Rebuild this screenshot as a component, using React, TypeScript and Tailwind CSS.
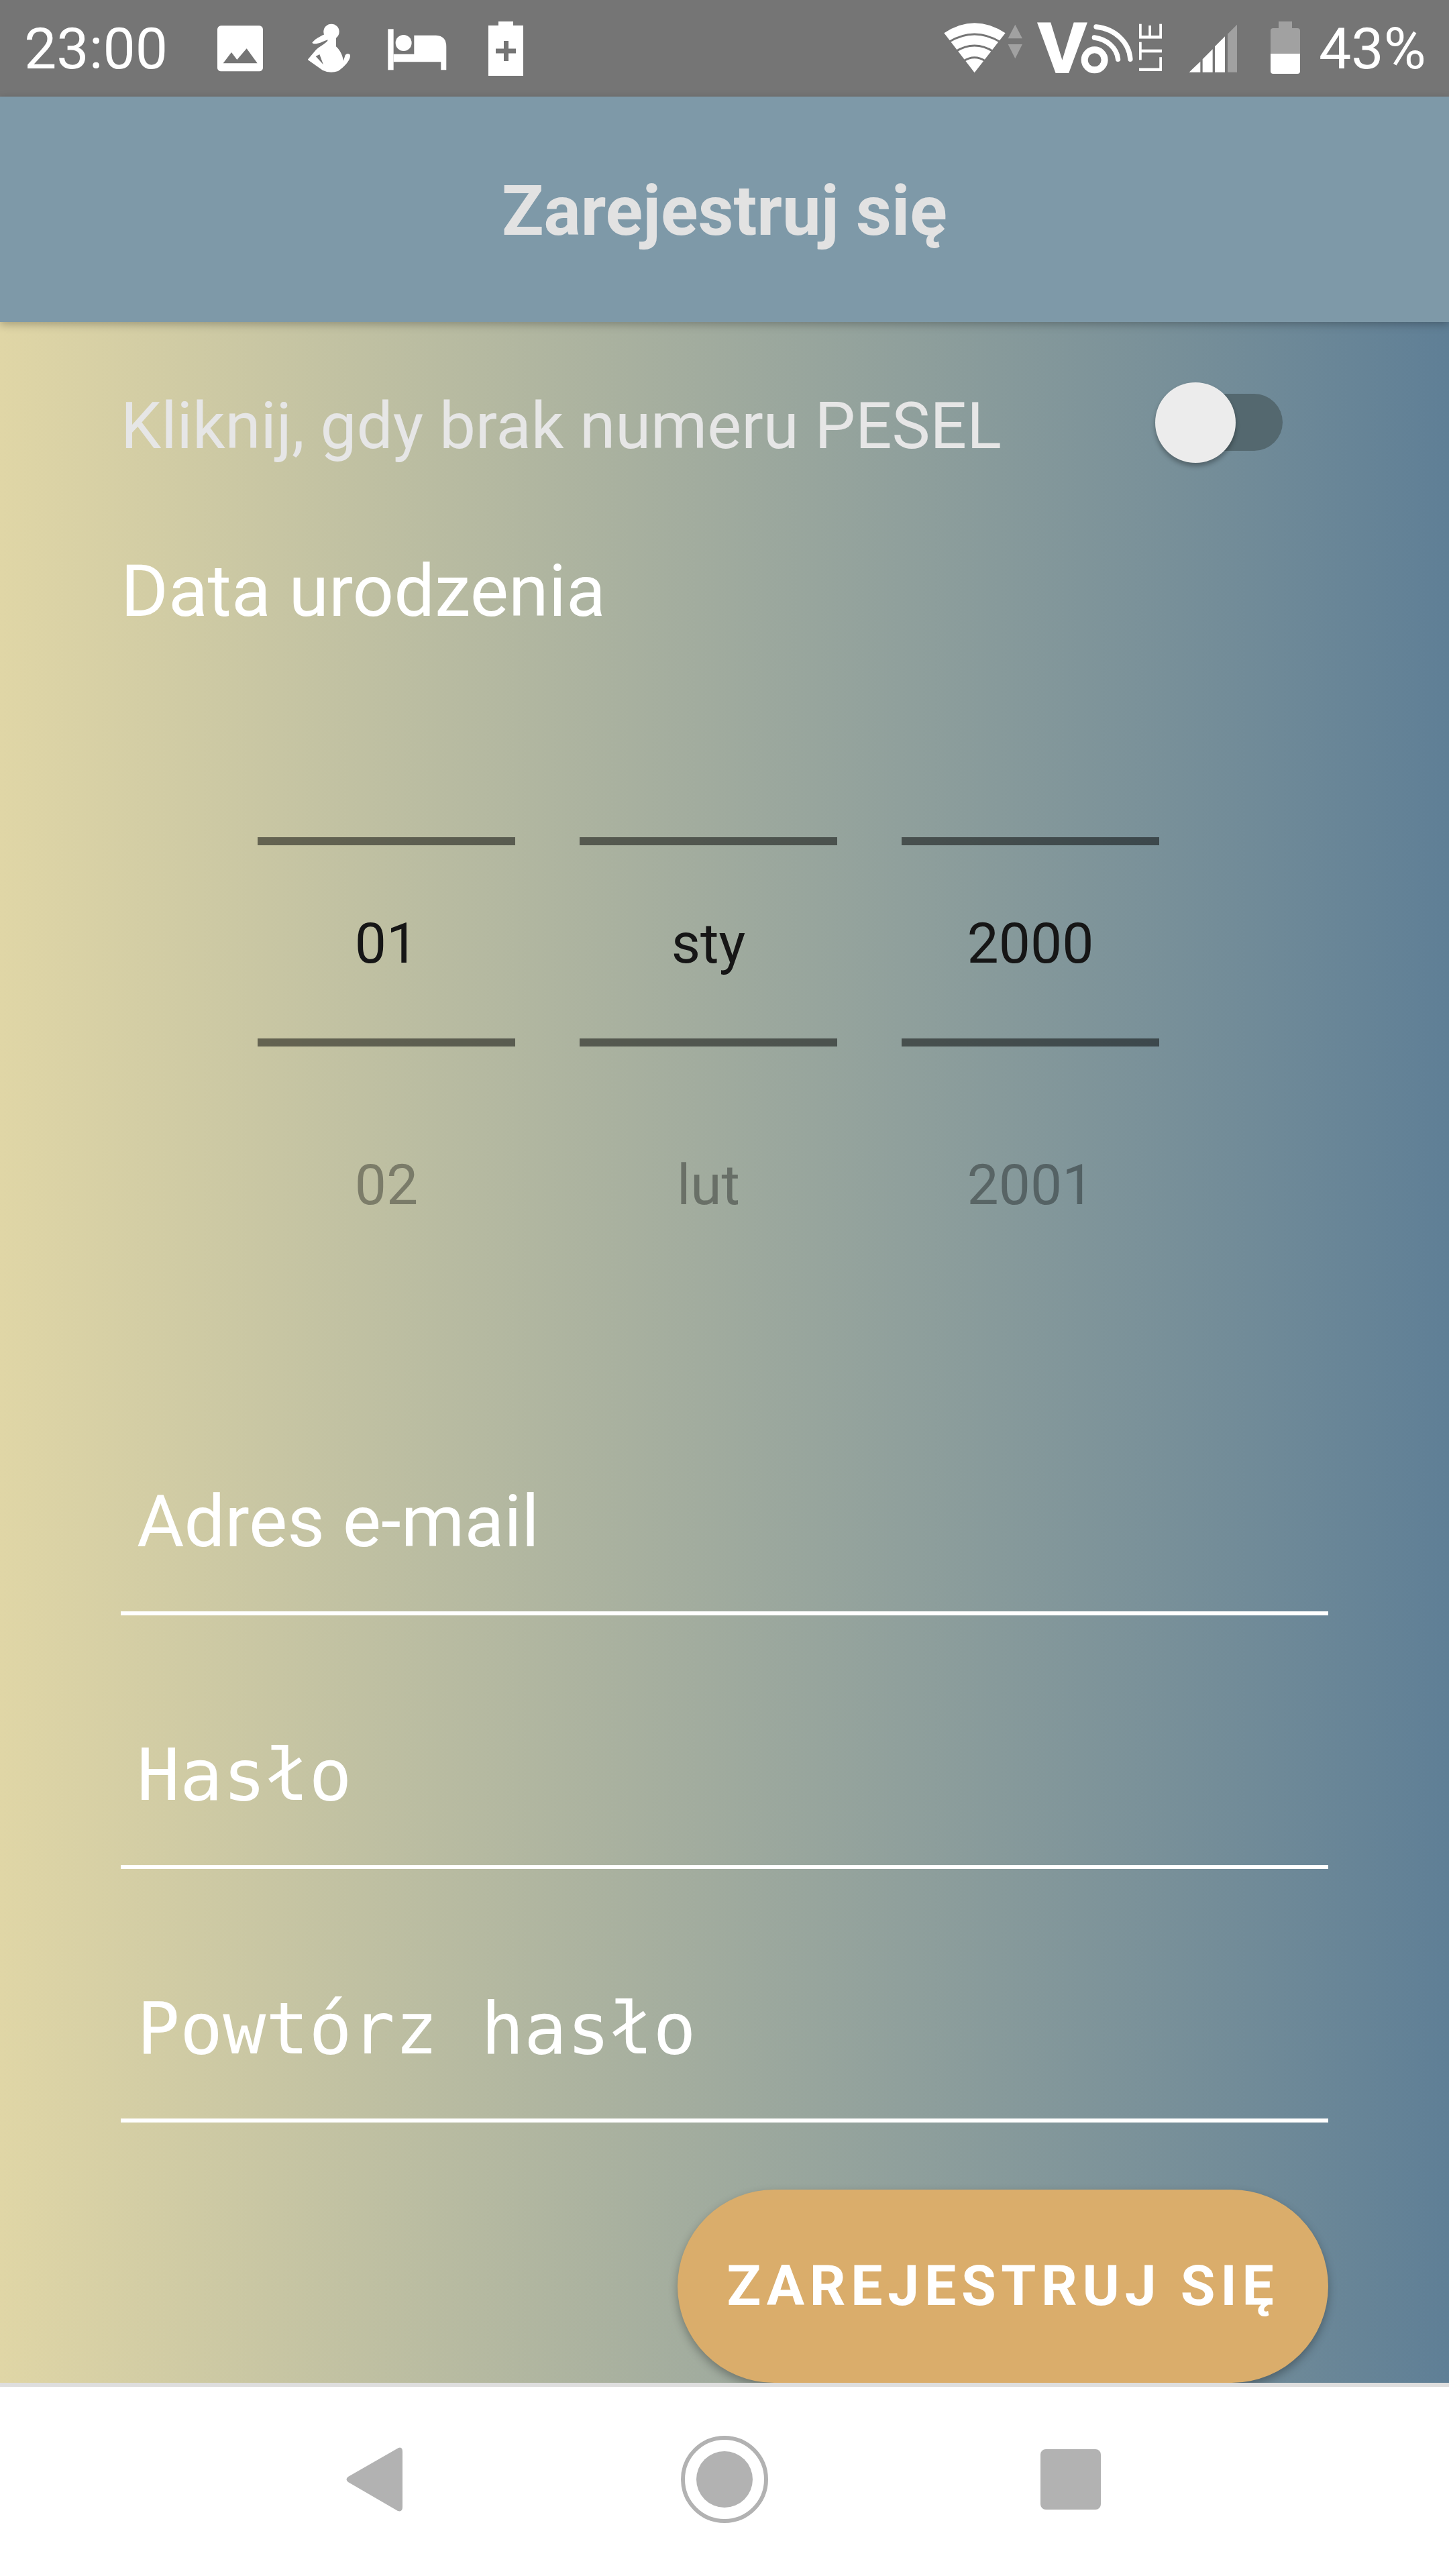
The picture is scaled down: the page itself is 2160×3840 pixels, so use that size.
import React from "react";

const G = "#757575";
const DIM = "#a1a1a1";

function ImageIcon() {
  return (
    <svg className="ml-[72px] shrink-0" width="68" height="144" viewBox="324 0 68 144">
      <g transform="translate(300 30) scale(0.3333)">
        <rect x="72" y="25" width="204" height="204" rx="16" fill="#fff" />
        <path d="M98 193 L135 144 L160 177 L203 127 L251 193 Z" fill={G} />
      </g>
    </svg>
  );
}

function RunnerIcon() {
  return (
    <svg className="ml-[67px] shrink-0" width="63" height="144" viewBox="459 0 63 144">
      <g transform="translate(300 30) scale(0.3333)" fill="#fff">
        <ellipse cx="582" cy="52" rx="35" ry="35" />
        <path d="M565 58 C530 72 505 88 496 101 C505 112 530 104 572 84 Z" />
        <path d="M565 70 L603 70 L603 118 C624 138 632 160 636 182 L644 156 Q656 144 667 156 C666 182 640 208 612 228 Q575 240 543 224 L476 177 L514 132 C530 116 552 108 565 92 Z" />
        <path d="M512 162 L529 153 L546 199 Z" fill={G} />
      </g>
    </svg>
  );
}

function BedIcon() {
  return (
    <svg className="ml-[56px] shrink-0" width="88" height="144" viewBox="578 0 88 144">
      <g transform="translate(300 30) scale(0.3333)" fill="#fff">
        <rect x="835" y="40" width="25" height="183" />
        <path d="M860 152 H952 V68 H1050 Q1096 70 1096 118 V223 H1072 V187 H860 Z" />
        <circle cx="905" cy="102" r="36" />
      </g>
    </svg>
  );
}

function BatteryPlusIcon() {
  return (
    <svg className="ml-[61px] shrink-0" width="53" height="144" viewBox="727 0 53 144">
      <path d="M743 38 V32 H765 V38 H780 V113 H728 V38 Z" fill="#fff" />
      <path d="M739 72.5 H751 V61 H758 V72.5 H769 V79.5 H758 V91 H751 V79.5 H739 Z" fill={G} />
    </svg>
  );
}

function WifiIcon() {
  return (
    <svg className="shrink-0" width="120" height="144" viewBox="1405 0 120 144">
      <g transform="translate(1300 20) scale(0.3333)">
        <path d="M458 265 L322 88 Q458 -2 596 88 Z" fill="#fff" />
        <path d="M342 128 Q458 58 574 128 M374 170 Q458 118 542 170 M408 214 Q458 180 508 214" stroke={G} strokeWidth="9" fill="none" />
        <path d="M640 50 L672 112 H608 Z M608 138 H672 L640 202 Z" fill={DIM} />
      </g>
    </svg>
  );
}

function VoLteIcon() {
  return (
    <svg className="ml-[22px] shrink-0 overflow-visible" width="186" height="144" viewBox="1547 0 186 144">
      <text x="1546" y="109" fontFamily="Roboto" fontWeight="800" fontSize="106" textLength="75" lengthAdjust="spacingAndGlyphs" fill="#fff">V</text>
      <g transform="translate(1300 20) scale(0.3333)" fill="none" stroke="#fff">
        <circle cx="995" cy="208" r="45" strokeWidth="30" />
        <path d="M1002 60 C1090 70 1150 130 1155 205 M994 108 C1050 115 1095 155 1100 205" strokeWidth="22" strokeLinecap="round" />
      </g>
      <text
        transform="translate(1732 110) rotate(-90)"
        fontFamily="Roboto"
        fontSize="48"
        textLength="76"
        lengthAdjust="spacingAndGlyphs"
        fill="#fff"
      >
        LTE
      </text>
    </svg>
  );
}

function SignalIcon() {
  return (
    <svg className="ml-[39px] shrink-0" width="72" height="144" viewBox="1772 0 72 144">
      <g transform="translate(1780 40) scale(0.3333)">
        <path d="M150 32 L192 -10 V203 H150 Z" fill={DIM} />
        <path d="M93 88 L138 43 V203 H93 Z M38 145 L83 100 V203 H38 Z M-22 203 L28 155 V203 Z" fill="#fff" />
      </g>
    </svg>
  );
}

function BatteryIcon() {
  return (
    <svg className="ml-[50px] shrink-0" width="44" height="144" viewBox="1894 0 44 144">
      <path d="M1906 42 V32 H1926 V42 H1934 Q1938 42 1938 46 V80 H1894 V46 Q1894 42 1898 42 Z" fill={DIM} />
      <path d="M1894 80 H1938 V106 Q1938 110 1934 110 H1898 Q1894 110 1894 106 Z" fill="#fff" />
    </svg>
  );
}

function StatusBar() {
  return (
    <div className="h-[144px] shrink-0 bg-[#757575] flex items-center font-['Roboto'] text-white text-[86px] leading-[98px]">
      <span className="ml-[36px] w-[216px] shrink-0 pt-[2px]">23:00</span>
      <ImageIcon />
      <RunnerIcon />
      <BedIcon />
      <BatteryPlusIcon />
      <div className="flex-1" />
      <WifiIcon />
      <VoLteIcon />
      <SignalIcon />
      <BatteryIcon />
      <span className="ml-[28px] w-[194px] shrink-0 pt-[2px]">43%</span>
    </div>
  );
}

function Wheel({ a, b }: { a: string; b: string }) {
  return (
    <div className="w-[384px] flex flex-col items-center font-['Roboto'] text-[84px] leading-[98px]">
      <div className="w-full h-[12px] bg-black/50" />
      <div className="w-full h-[288px] flex items-center justify-center pt-[6px] text-[#161616]">{a}</div>
      <div className="w-full h-[12px] bg-black/50" />
      <div className="mt-[158px] text-black/35">{b}</div>
    </div>
  );
}

function Field({ label, mono }: { label: string; mono?: boolean }) {
  return (
    <div
      className={
        "border-b-[6px] border-white pl-[24px] pb-[71px] text-white leading-[126px] " +
        (mono ? "font-['DejaVu_Sans_Mono'] text-[106.5px]" : "font-['Roboto'] text-[108px]")
      }
    >
      {label}
    </div>
  );
}

export default function App() {
  return (
    <div className="w-[2160px] h-[3840px] flex flex-col overflow-hidden">
      <StatusBar />
      <div className="relative z-10 h-[336px] shrink-0 bg-[#7e99a8] flex items-center justify-center shadow-[0_4px_12px_rgba(0,0,0,0.25)]">
        <span className="font-['Roboto'] font-bold text-[#e2e2e2] text-[103px] leading-[120px] pt-[6px]">
          Zarejestruj się
        </span>
      </div>
      <main className="flex-1 bg-linear-to-r/srgb from-[#e0d6a6] to-[#5f7f96] px-[180px] pt-[90px] flex flex-col">
        <div className="flex items-start justify-between pr-[68px]">
          <span className="font-['Roboto'] text-[#e6e6e6] text-[96px] leading-[112px] mt-[9px]">
            Kliknij, gdy brak numeru PESEL
          </span>
          <div className="relative w-[190px] h-[121px] shrink-0">
            <div className="absolute left-[14px] top-[17px] w-[176px] h-[85px] rounded-full bg-[#54686f]" />
            <div className="absolute left-0 top-0 w-[120px] h-[120px] rounded-full bg-[#ececec] shadow-[0_5px_7px_rgba(0,0,0,0.3)]" />
          </div>
        </div>
        <div className="mt-[127px] font-['Roboto'] text-white text-[108px] leading-[126px]">Data urodzenia</div>
        <div className="mt-[304px] pl-[204px] flex gap-[96px]">
          <Wheel a="01" b="02" />
          <Wheel a="sty" b="lut" />
          <Wheel a="2000" b="2001" />
        </div>
        <div className="mt-[389px] flex flex-col gap-[175px]">
          <Field label="Adres e-mail" />
          <Field label="Hasło" mono />
          <Field label="Powtórz hasło" mono />
        </div>
        <button className="mt-[100px] self-end w-[970px] h-[288px] rounded-full bg-[#daad6b] shadow-[0_6px_14px_rgba(0,0,0,0.3)] flex items-center justify-center font-['Roboto'] font-bold text-white text-[84px] leading-[98px] tracking-[7.7px]">
          ZAREJESTRUJ SIĘ
        </button>
      </main>
      <nav className="relative z-10 h-[288px] shrink-0 bg-white border-t-[6px] border-[#dedede] flex items-center pl-[516px] pb-[6px]">
        <svg width="84" height="98" viewBox="0 0 84 98" className="shrink-0">
          <path d="M78 2 Q84 0 84 8 V90 Q84 98 77 96 L3 53 Q-2 49 3 45 Z" fill="#b2b2b2" />
        </svg>
        <svg width="130" height="130" viewBox="0 0 130 130" className="ml-[415px] shrink-0">
          <circle cx="65" cy="65" r="62" fill="none" stroke="#b2b2b2" strokeWidth="6" />
          <circle cx="65" cy="65" r="42" fill="#b2b2b2" />
        </svg>
        <div className="ml-[406px] w-[90px] h-[90px] rounded-[8px] bg-[#b2b2b2]" />
      </nav>
    </div>
  );
}
